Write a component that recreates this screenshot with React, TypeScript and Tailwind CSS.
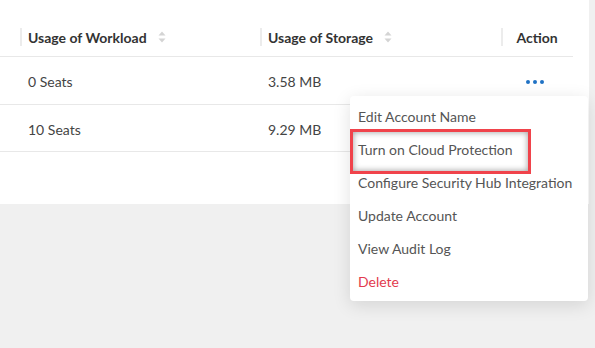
import React from "react";

function SortIcon() {
  return (
    <svg width="8" height="12" viewBox="0 0 8 12" className="ml-[11px]">
      <path d="M4 0.5 L7.5 4.5 L0.5 4.5 Z" fill="#d4d4d4" />
      <path d="M4 11.5 L7.5 7.5 L0.5 7.5 Z" fill="#d4d4d4" />
    </svg>
  );
}

function HeaderCell({ label, sort, center }: { label: string; sort?: boolean; center?: boolean }) {
  return (
    <div className={"relative flex items-center h-full " + (center ? "justify-center" : "pl-[8px]")}>
      <div className="absolute left-0 top-1/2 -translate-y-1/2 w-[2px] h-[18px] bg-[#ececec]" />
      <span className="font-bold text-[14px] text-[#333333]">{label}</span>
      {sort && <SortIcon />}
    </div>
  );
}

const rows = [
  { seats: "0 Seats", storage: "3.58 MB", action: true, h: "h-[48px]" },
  { seats: "10 Seats", storage: "9.29 MB", action: false, h: "h-[47px]" },
];

const menu = [
  "Edit Account Name",
  "Turn on Cloud Protection",
  "Configure Security Hub Integration",
  "Update Account",
  "View Audit Log",
];

export default function App() {
  return (
    <div
      className="relative w-[595px] h-[348px] overflow-hidden bg-[#f0f0f0]"
      style={{ fontFamily: "Lato, 'Open Sans', sans-serif" }}
    >
      <div className="w-[589px] h-[204px] bg-white">
        <div className="w-[573px]">
          <div className="grid grid-cols-[20px_240px_241px_72px] h-[57px] pt-[18px] border-b border-[#e8e8e8]">
            <div />
            <HeaderCell label="Usage of Workload" sort />
            <HeaderCell label="Usage of Storage" sort />
            <HeaderCell label="Action" center />
          </div>
          {rows.map((r, i) => (
            <div
              key={i}
              className={
                "grid grid-cols-[20px_240px_241px_72px] items-center pt-[2px] border-b border-[#e8e8e8] text-[14px] text-[#444444] " +
                r.h
              }
            >
              <div />
              <div className="pl-[8px]">{r.seats}</div>
              <div className="pl-[8px]">{r.storage}</div>
              <div className="flex justify-center pr-[4px]">
                {r.action && (
                  <div className="flex gap-[3px]">
                    <span className="w-[4px] h-[4px] rounded-full bg-[#1f72c4]" />
                    <span className="w-[4px] h-[4px] rounded-full bg-[#1f72c4]" />
                    <span className="w-[4px] h-[4px] rounded-full bg-[#1f72c4]" />
                  </div>
                )}
              </div>
            </div>
          ))}
        </div>
      </div>

      <div className="absolute left-[350px] top-[96px] w-[238px] h-[205px] bg-white rounded-[4px] shadow-[0_4px_18px_rgba(0,0,0,0.12)] pt-[4px]">
        {menu.map((m) => (
          <div key={m} className="h-[33px] flex items-center pl-[8px] text-[14px] text-[#555555]">
            {m}
          </div>
        ))}
        <div className="h-[33px] flex items-center pl-[8px] text-[14px] text-[#e23b4e]">Delete</div>
      </div>

      <div className="absolute left-[350px] top-[129px] w-[181px] h-[45px] border-[3px] border-[#f0434b] shadow-[inset_0_0_6px_rgba(0,0,0,0.4)]" />
    </div>
  );
}
